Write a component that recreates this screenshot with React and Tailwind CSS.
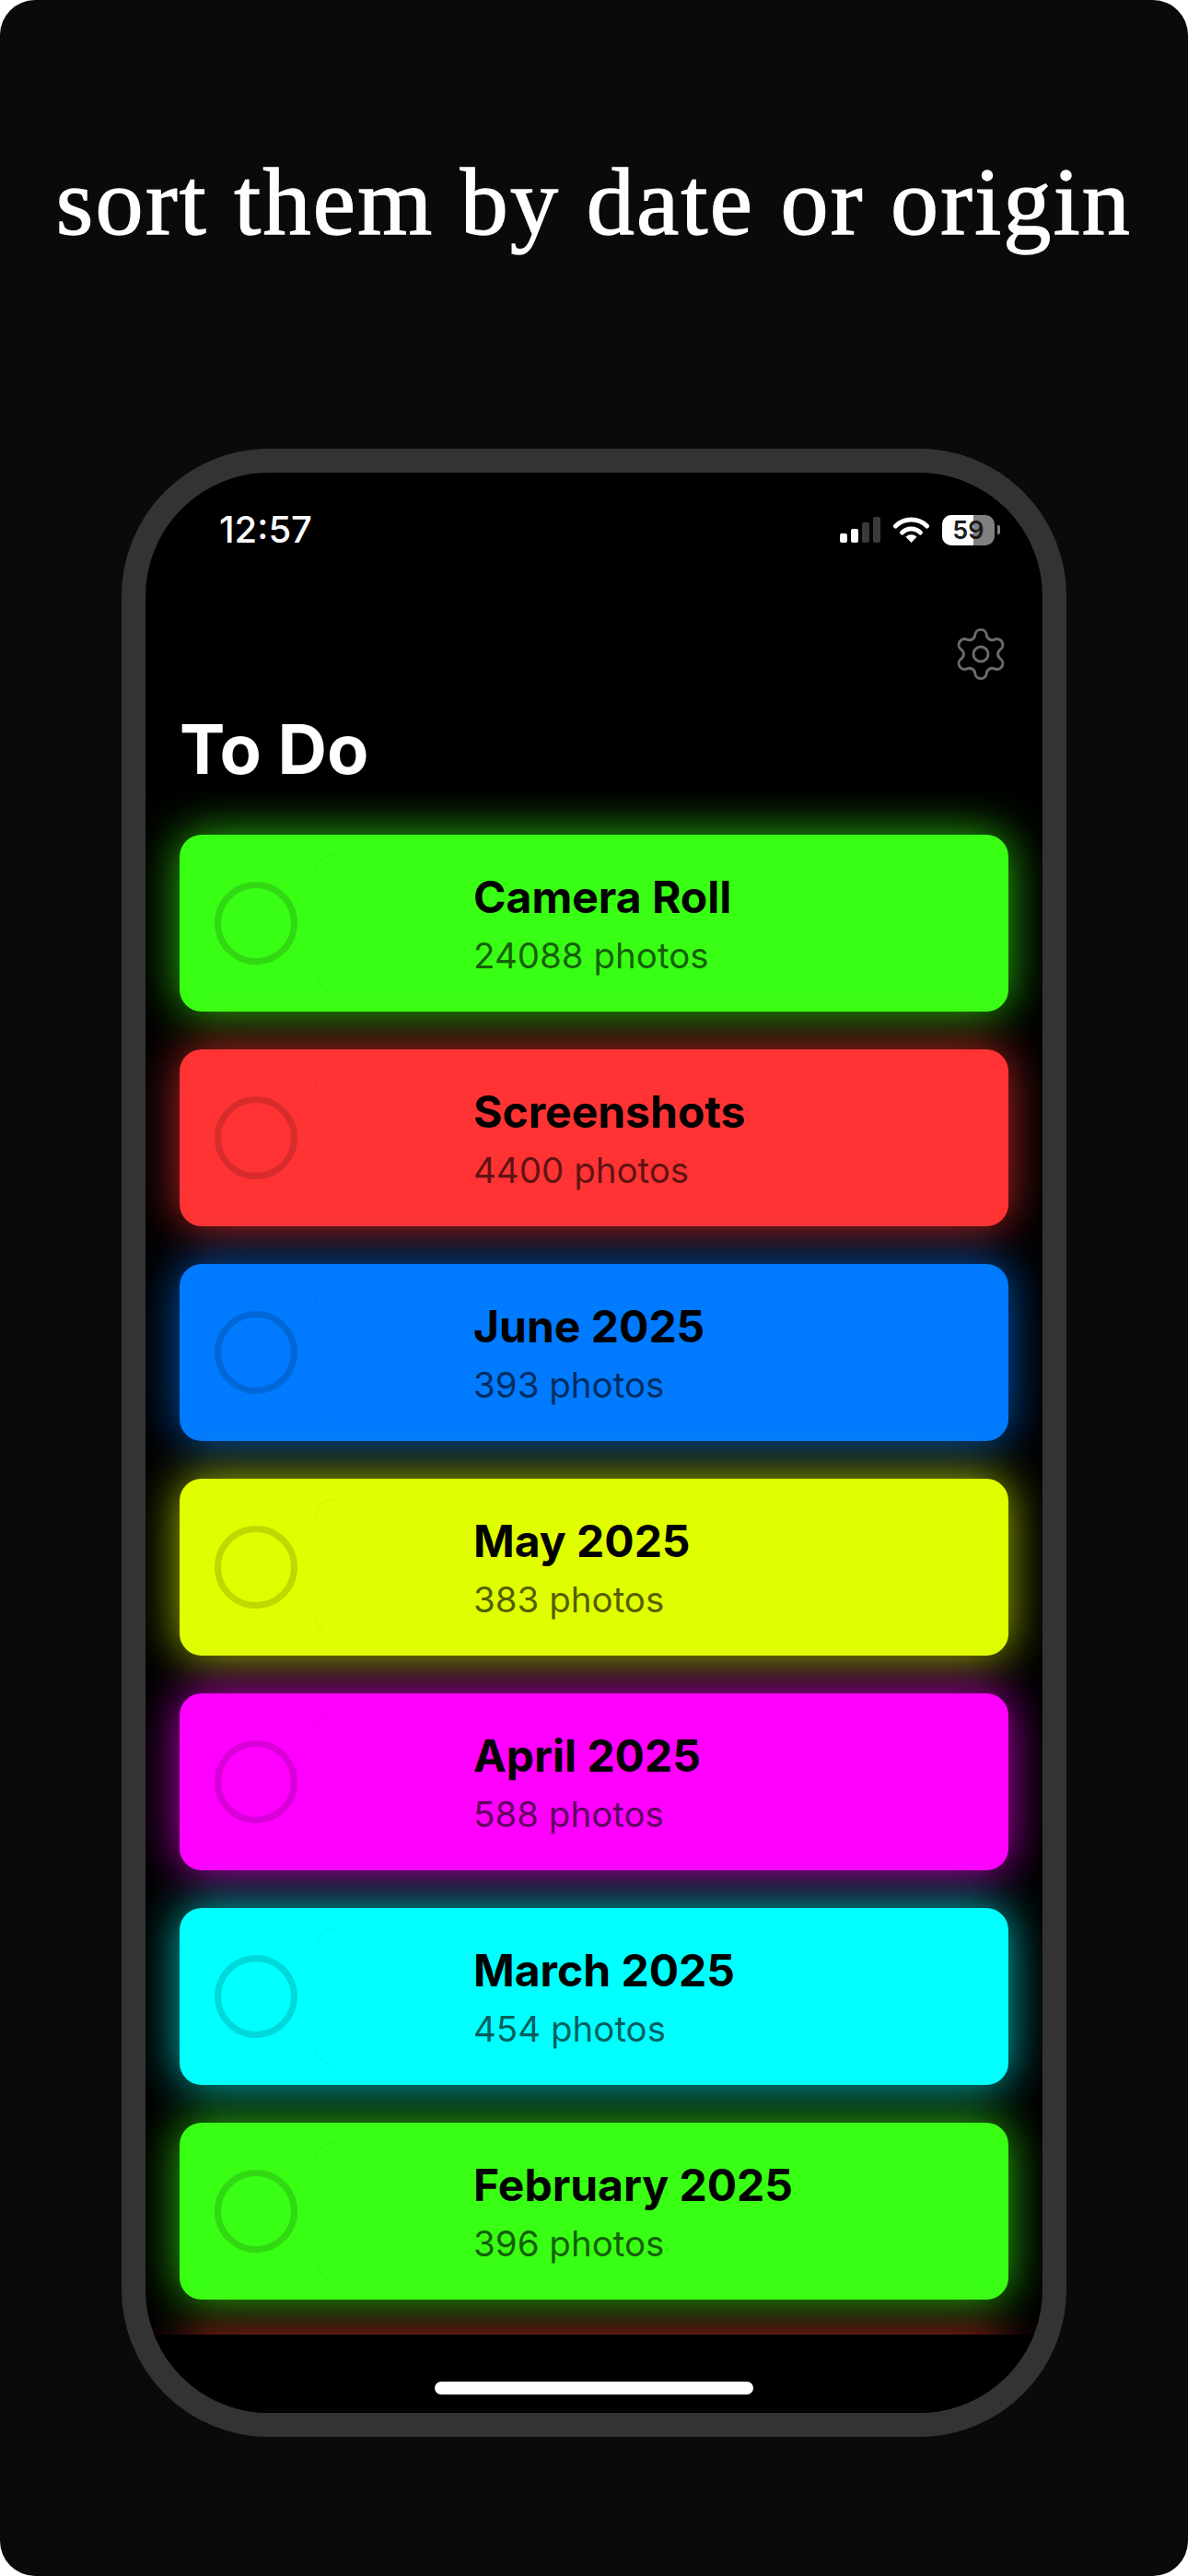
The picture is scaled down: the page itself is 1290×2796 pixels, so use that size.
import React from "react";
import { Settings } from "lucide-react";

const rows = [
  { title: "Camera Roll", count: "24088 photos", card: "bg-[#39ff14] shadow-[0_0_50px_rgba(57,255,20,0.75)]" },
  { title: "Screenshots", count: "4400 photos", card: "bg-[#ff3333] shadow-[0_0_50px_rgba(255,51,51,0.75)]" },
  { title: "June 2025", count: "393 photos", card: "bg-[#007aff] shadow-[0_0_50px_rgba(0,122,255,0.75)]" },
  { title: "May 2025", count: "383 photos", card: "bg-[#dfff00] shadow-[0_0_50px_rgba(223,255,0,0.75)]" },
  { title: "April 2025", count: "588 photos", card: "bg-[#ff00ff] shadow-[0_0_50px_rgba(255,0,255,0.75)]" },
  { title: "March 2025", count: "454 photos", card: "bg-[#00ffff] shadow-[0_0_50px_rgba(0,255,255,0.75)]" },
  { title: "February 2025", count: "396 photos", card: "bg-[#39ff14] shadow-[0_0_50px_rgba(57,255,20,0.75)]" },
];

function Signal() {
  return (
    <div className="flex items-end gap-[4px] h-[28px]">
      <div className="w-[8px] h-[10px] rounded-[2px] bg-white" />
      <div className="w-[8px] h-[15px] rounded-[2px] bg-white" />
      <div className="w-[8px] h-[22px] rounded-[2px] bg-[#3a3a3a]" />
      <div className="w-[8px] h-[28px] rounded-[2px] bg-[#3a3a3a]" />
    </div>
  );
}

function Wifi() {
  return (
    <svg width="41" height="29" viewBox="0 0 41 29" fill="none">
      <path d="M3.5 10A24 24 0 0 1 37.5 10" stroke="#fff" strokeWidth="5" strokeLinecap="round" />
      <path d="M10.6 17.1A14 14 0 0 1 30.4 17.1" stroke="#fff" strokeWidth="5" strokeLinecap="round" />
      <path d="M20.5 28L14.5 21.8A8.5 8.5 0 0 1 26.5 21.8Z" fill="#fff" />
    </svg>
  );
}

function Battery() {
  return (
    <div className="flex items-center gap-[3px]">
      <div className="relative w-[57px] h-[33px] rounded-[10px] overflow-hidden bg-[#808080]">
        <div className="absolute inset-y-0 left-0 w-[34px] bg-white" />
        <div className="absolute inset-0 flex items-center justify-center text-[27px] leading-none font-semibold text-[#1c1c1c]">
          59
        </div>
      </div>
      <div className="w-[3px] h-[10px] rounded-r-[2px] bg-[#808080]" />
    </div>
  );
}

function Corners() {
  return (
    <svg className="shrink-0" width="150" height="150" viewBox="0 0 150 150" fill="none">
      <path d="M1 20A20 20 0 0 1 20 1" stroke="rgba(0,0,0,0.04)" strokeWidth="1.5" />
      <path d="M1 130A20 20 0 0 0 20 149" stroke="rgba(0,0,0,0.04)" strokeWidth="1.5" />
    </svg>
  );
}

function Row({ title, count, card }) {
  return (
    <div className={`h-[192px] shrink-0 rounded-[24px] pl-[38px] flex items-center ${card}`}>
      <div className="w-[90px] h-[90px] shrink-0 rounded-full border-[7px] border-black/15" />
      <div className="ml-[19px]">
        <Corners />
      </div>
      <div className="ml-[22px] mt-[2px] flex flex-col">
        <div className="text-[48px] leading-[58px] font-bold text-black">{title}</div>
        <div className="mt-[10px] text-[38.5px] leading-[48px] text-black/65">{count}</div>
      </div>
    </div>
  );
}

export default function App() {
  return (
    <div className="bg-white font-['Inter',sans-serif]">
      <div className="h-[2796px] rounded-[38px] bg-[#0a0a0a] flex flex-col items-center overflow-hidden">
        <h1 className="mt-[164px] h-[120px] text-[104px] leading-[110px] tracking-[2.3px] whitespace-nowrap font-normal text-white font-['Liberation_Serif',serif] [-webkit-text-stroke:1.4px_white]">
          sort them by date or origin
        </h1>
        <div className="mt-[203px] w-[1026px] h-[2158px] rounded-[160px] border-[26px] border-[#333333] bg-black overflow-hidden flex flex-col">
          <div className="pt-[40px] pl-[80px] pr-[46px] flex items-center justify-between h-[84px]">
            <span className="text-[40px] leading-none font-medium text-white">12:57</span>
            <div className="flex items-center gap-[13px]">
              <Signal />
              <Wifi />
              <Battery />
            </div>
          </div>
          <div className="mt-[81px] pr-[35px] flex justify-end h-[64px]">
            <Settings size={64} strokeWidth={1.1} className="text-[#6b6b6b]" />
          </div>
          <div className="mt-[26px] pl-[37px] text-[74px] leading-[90px] font-bold text-white">To Do</div>
          <div className="mt-[2px] flex-1 min-h-0 overflow-hidden pt-[46px] px-[37px] flex flex-col gap-[41px]">
            {rows.map((r) => (
              <Row key={r.title} {...r} />
            ))}
            <div className="h-[192px] shrink-0 rounded-[24px] bg-[#ff3333] shadow-[0_0_50px_rgba(255,51,51,0.75)]" />
          </div>
          <div className="h-[85px] shrink-0 bg-black flex justify-center pt-[51px]">
            <div className="w-[346px] h-[14px] rounded-full bg-white" />
          </div>
        </div>
      </div>
    </div>
  );
}
